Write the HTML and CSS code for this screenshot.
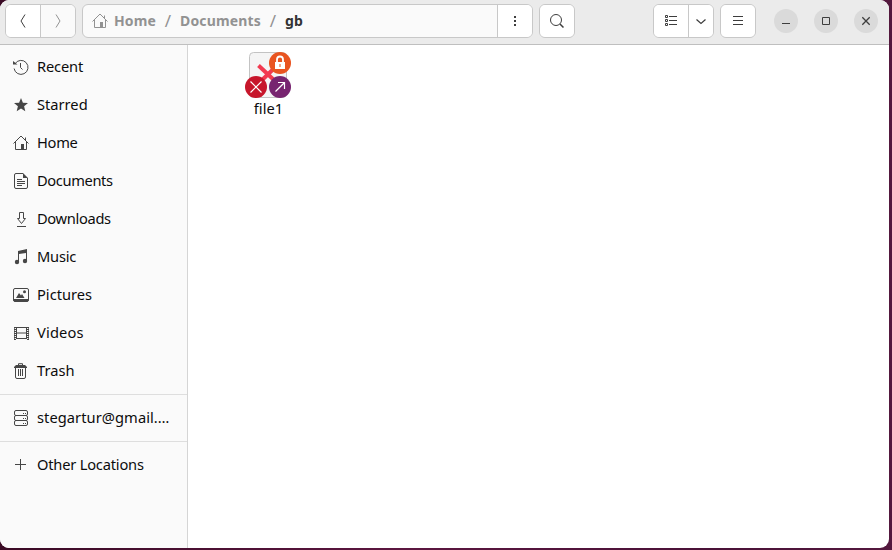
FILE: index.html
```html
<!DOCTYPE html>
<html lang="en">
<head>
<meta charset="utf-8">
<title>gb</title>
<link rel="stylesheet" href="styles.css">
</head>
<body>
<div class="window">
  <header class="headerbar">
    <div class="group nav">
      <button class="btn" aria-label="Back"><svg width="16" height="16" viewBox="0 0 16 16"><path d="M10 1.500L6 8l4 6.500"/></svg></button>
      <button class="btn off" aria-label="Forward"><svg width="16" height="16" viewBox="0 0 16 16"><path d="M6 1.500L10 8l-4 6.500"/></svg></button>
    </div>
    <div class="group path">
      <div class="crumbs">
        <svg width="16" height="16" viewBox="0 0 16 16"><path d="M.5 8.500L8 1l7.500 7.500M2.500 7v7.500H8m5.500-7.500v7.500H11M12.500 5V2.500"/><path class="fill" d="M8 9h3v6H8z"/></svg>
        <span class="c-home">Home</span><span class="slash">/</span><span class="c-docs">Documents</span><span class="slash">/</span><span class="c-gb">gb</span>
      </div>
      <button class="btn" aria-label="Options"><svg width="16" height="16" viewBox="0 0 16 16"><path class="fill" d="M7 3h2v2H7zM7 7h2v2H7zM7 11h2v2H7z"/></svg></button>
    </div>
    <div class="group search">
      <button class="btn" aria-label="Search"><svg width="16" height="16" viewBox="0 0 16 16"><circle cx="7" cy="7" r="5.500"/><path d="M11 11l3.500 3.500" stroke-width="1.500"/></svg></button>
    </div>
    <div class="group view">
      <button class="btn" aria-label="List view"><svg width="16" height="16" viewBox="0 0 16 16"><path d="M2.500 2.500h2v2h-2zM2.500 6.500h2v2h-2zM2.500 10.500h2v2h-2zM6 3.500h8M6 7.500h8M6 11.500h8"/></svg></button>
      <button class="btn" aria-label="View options"><svg width="16" height="16" viewBox="0 0 16 16"><path d="M3.500 6.500L8 10.500l4.500-4" stroke-width="1.200"/></svg></button>
    </div>
    <div class="group menu">
      <button class="btn" aria-label="Menu"><svg width="16" height="16" viewBox="0 0 16 16"><path d="M3 3.500h10M3 7.500h10M3 11.500h10"/></svg></button>
    </div>
    <div class="controls">
      <button aria-label="Minimize"><svg width="16" height="16" viewBox="0 0 16 16"><path d="M4 10.500h8"/></svg></button>
      <button aria-label="Maximize"><svg width="16" height="16" viewBox="0 0 16 16"><path d="M4.500 4.500h7v7h-7z"/></svg></button>
      <button aria-label="Close"><svg width="16" height="16" viewBox="0 0 16 16"><path d="M4.300 4.300l7.400 7.400m0-7.400l-7.400 7.400" stroke-width="1.300"/></svg></button>
    </div>
  </header>
  <div class="body">
    <nav class="sidebar">
      <a class="row recent"><svg width="16" height="16" viewBox="0 0 16 16"><path d="M2 4.800A7 7 0 1 1 1.100 9.500M7.500 4v4.500l2 2"/><path class="fill" d="M0 2l4.500 3.500H0z"/></svg><span>Recent</span></a>
      <a class="row starred"><svg width="16" height="16" viewBox="0 0 16 16"><path class="fill" d="M8 1l1.900 4.700 5.100.3-3.900 3.300 1.200 5L8 11.600l-4.300 2.700 1.200-5L1 6l5.100-.3z"/></svg><span>Starred</span></a>
      <a class="row home"><svg width="16" height="16" viewBox="0 0 16 16"><path d="M.5 8.500L8 1l7.500 7.500M2.500 7v7.500H8m5.500-7.500v7.500H11M12.500 5V2.500"/><path class="fill" d="M8 9h3v6H8z"/></svg><span>Home</span></a>
      <a class="row documents"><svg width="16" height="16" viewBox="0 0 16 16"><path d="M10 .5H3A1.500 1.500 0 0 0 1.500 2v12A1.500 1.500 0 0 0 3 15.500h10a1.500 1.500 0 0 0 1.500-1.500V5M4 6.500h5M4 8.500h8M4 10.500h8M4 12.500h5"/><path class="fill" d="M10 0l5 5h-5z"/></svg><span>Documents</span></a>
      <a class="row downloads"><svg width="16" height="16" viewBox="0 0 16 16"><path d="M6.500 1.500h4v6h2l-4 5-4-5h2zM4 15.500h9"/></svg><span>Downloads</span></a>
      <a class="row music"><svg width="16" height="16" viewBox="0 0 16 16"><path class="fill" d="M5 2l9-2v11.500H13V4L6 5v8H5z"/><circle class="fill" cx="4" cy="13" r="2.200"/><circle class="fill" cx="12" cy="12" r="2.200"/></svg><span>Music</span></a>
      <a class="row pictures"><svg width="16" height="16" viewBox="0 0 16 16"><rect x=".5" y="1.500" width="15" height="12.500" rx="1.500"/><path class="fill" d="M0 12h16v1.500l-1.500 1.500h-13L0 13.500zM3 11l3-5 2 2.500L9 7l2.500 4z"/><circle class="fill" cx="11.500" cy="4.700" r="1.500"/></svg><span>Pictures</span></a>
      <a class="row videos"><svg width="16" height="16" viewBox="0 0 16 16"><path d="M3.500 2v12M13.500 2v12M3 2.500h11M3 8h11M3 13.500h11"/><path d="M2 2v13M15 2v13" stroke-width="2" stroke-dasharray="1 1"/><path d="M1.500 2v12.500M15.500 2v12.500" stroke-width=".7"/></svg><span>Videos</span></a>
      <a class="row trash"><svg width="16" height="16" viewBox="0 0 16 16"><path d="M5.500 2V.7h4V2M2.500 5v9a1.500 1.500 0 0 0 1.500 1.500h7a1.500 1.500 0 0 0 1.500-1.500V5M5.500 6v7M7.500 6v7M9.500 6v7"/><path class="fill" d="M3 2h9l2 2v1H1V4z"/></svg><span>Trash</span></a>
      <hr>
      <a class="row mail"><svg width="16" height="16" viewBox="0 0 16 16"><rect x="1.500" y=".5" width="13" height="5" rx="1.500"/><rect x="1.500" y="5.500" width="13" height="5" rx="1.500"/><rect x="1.500" y="10.500" width="13" height="5" rx="1.500"/><path d="M10 3.500h3M10 8.500h3M10 13.500h3" stroke-dasharray="1 1"/></svg><span>stegartur@gmail.…</span></a>
      <hr>
      <a class="row other"><svg width="16" height="16" viewBox="0 0 16 16"><path d="M7.500 2v11M2 7.500h11"/></svg><span>Other Locations</span></a>
    </nav>
    <main class="files">
      <figure class="file">
        <svg width="48" height="48" viewBox="0 0 48 48">
          <rect class="paper" x="5.500" y="1.500" width="37" height="45" rx="4"/>
          <path class="cross" d="M14.500 14.500L31 30M33 14.500L15 32"/>
          <circle class="lock" cx="36" cy="12" r="11"/>
          <circle class="broken" cx="12" cy="36" r="11"/>
          <circle class="link" cx="36" cy="36" r="11"/>
          <path class="solid" d="M31 11h10v7H31z"/>
          <path class="white lockarc" d="M33 11V8.500a3 3 0 0 1 6 0V11"/>
          <path class="keyhole" d="M35.500 13h1v3h-1z"/>
          <path class="white" d="M6.500 30.500l11 11m0-11l-11 11M31.500 40.500l9-9M34 31.500h6.500V38"/>
        </svg>
        <figcaption>file1</figcaption>
      </figure>
    </main>
  </div>
</div>
</body>
</html>
```
FILE: styles.css
```css
* { box-sizing: border-box; }
body {
  margin: 0;
  height: 550px;
  overflow: hidden;
  background: linear-gradient(90deg, #3a0a25, #5c1640 45%, #4a1238 80%, #54183e);
  font: 14.67px/20px "Noto Sans", "Open Sans", sans-serif;
  color: #0c0c0c;
}
.window {
  width: 889px;
  height: 548px;
  border-radius: 9px;
  overflow: hidden;
  background: #fff;
  display: flex;
  flex-direction: column;
}
svg { display: block; flex: none; fill: none; stroke: currentColor; }
.fill { fill: currentColor; stroke: none; }
button { padding: 0; border: 0; color: #3d3d3d; font: inherit; }
.headerbar {
  height: 45px;
  flex: none;
  display: flex;
  align-items: flex-start;
  padding: 4px 11px 0 5px;
  background: #ebebeb;
  border-bottom: 1px solid #bfbfbf;
}
.group {
  height: 34px;
  display: flex;
  border: 1px solid #c8c8c8;
  border-radius: 6px;
  background: #fafafa;
  overflow: hidden;
}
.btn { flex: 1; display: flex; align-items: center; justify-content: center; background: #fff; }
.btn + .btn, .crumbs + .btn { border-left: 1px solid #c8c8c8; }
.off { background: #fafafa; color: #929292; }
.nav { width: 71px; margin-right: 6px; }
.path { width: 451px; margin-right: 6px; }
.path .btn { flex: 0 0 35px; }
.crumbs { flex: 1; display: flex; align-items: center; padding-left: 9px; color: #929292; font-weight: 700; font-size: 14px; }
.crumbs svg { margin-right: 6px; }
.crumbs span { white-space: nowrap; }
.c-home { width: 42px; letter-spacing: .1px; }
.slash { width: 24px; text-align: center; font-weight: 400; font-size: 17px; }
.c-docs { width: 81px; letter-spacing: .15px; }
.c-gb { color: #333; letter-spacing: .2px; }
.search { width: 36px; }
.view { width: 61px; margin-left: auto; margin-right: 6px; }
.view .btn:first-child { flex: 0 0 34px; }
.menu { width: 36px; }
.controls { display: flex; gap: 16px; margin: 5px 0 0 18px; }
.controls button { width: 24px; height: 24px; border-radius: 50%; background: #dadada; display: flex; align-items: center; justify-content: center; }
.body { flex: 1; display: flex; min-height: 0; }
.sidebar { width: 188px; background: #fafafa; border-right: 1px solid #d5d5d5; padding-top: 3px; }
.row { display: flex; align-items: center; height: 38px; padding-left: 13px; gap: 8px; white-space: nowrap; }
.row span { padding-bottom: 2px; }
.row svg { color: #464646; }
.recent { letter-spacing: -.15px; }
.home { letter-spacing: -.3px; }
.documents { letter-spacing: -.37px; }
.downloads { letter-spacing: -.33px; }
.music { letter-spacing: -.2px; }
.videos { letter-spacing: .15px; }
.mail { letter-spacing: .06px; }
.other { letter-spacing: -.2px; }
hr { margin: 4px 0; border: 0; height: 1px; background: #dedede; }
.files { flex: 1; padding: 6px 0 0 56px; }
.file { width: 48px; margin: 0; display: flex; flex-direction: column; align-items: center; }
.file figcaption { margin: -1px 0 0 1px; }
.paper { fill: #f5f5f5; stroke: #c3c3c3; }
.cross { stroke: #f23a50; stroke-width: 4; }
.lock { fill: #e95420; stroke: none; }
.broken { fill: #c7162b; stroke: none; }
.link { fill: #772470; stroke: none; }
.solid { fill: #fff; stroke: none; }
.keyhole { fill: #e95420; stroke: none; }
.white { stroke: #fff; stroke-width: 1.2; }
.lockarc { stroke-width: 1.8; }
```
